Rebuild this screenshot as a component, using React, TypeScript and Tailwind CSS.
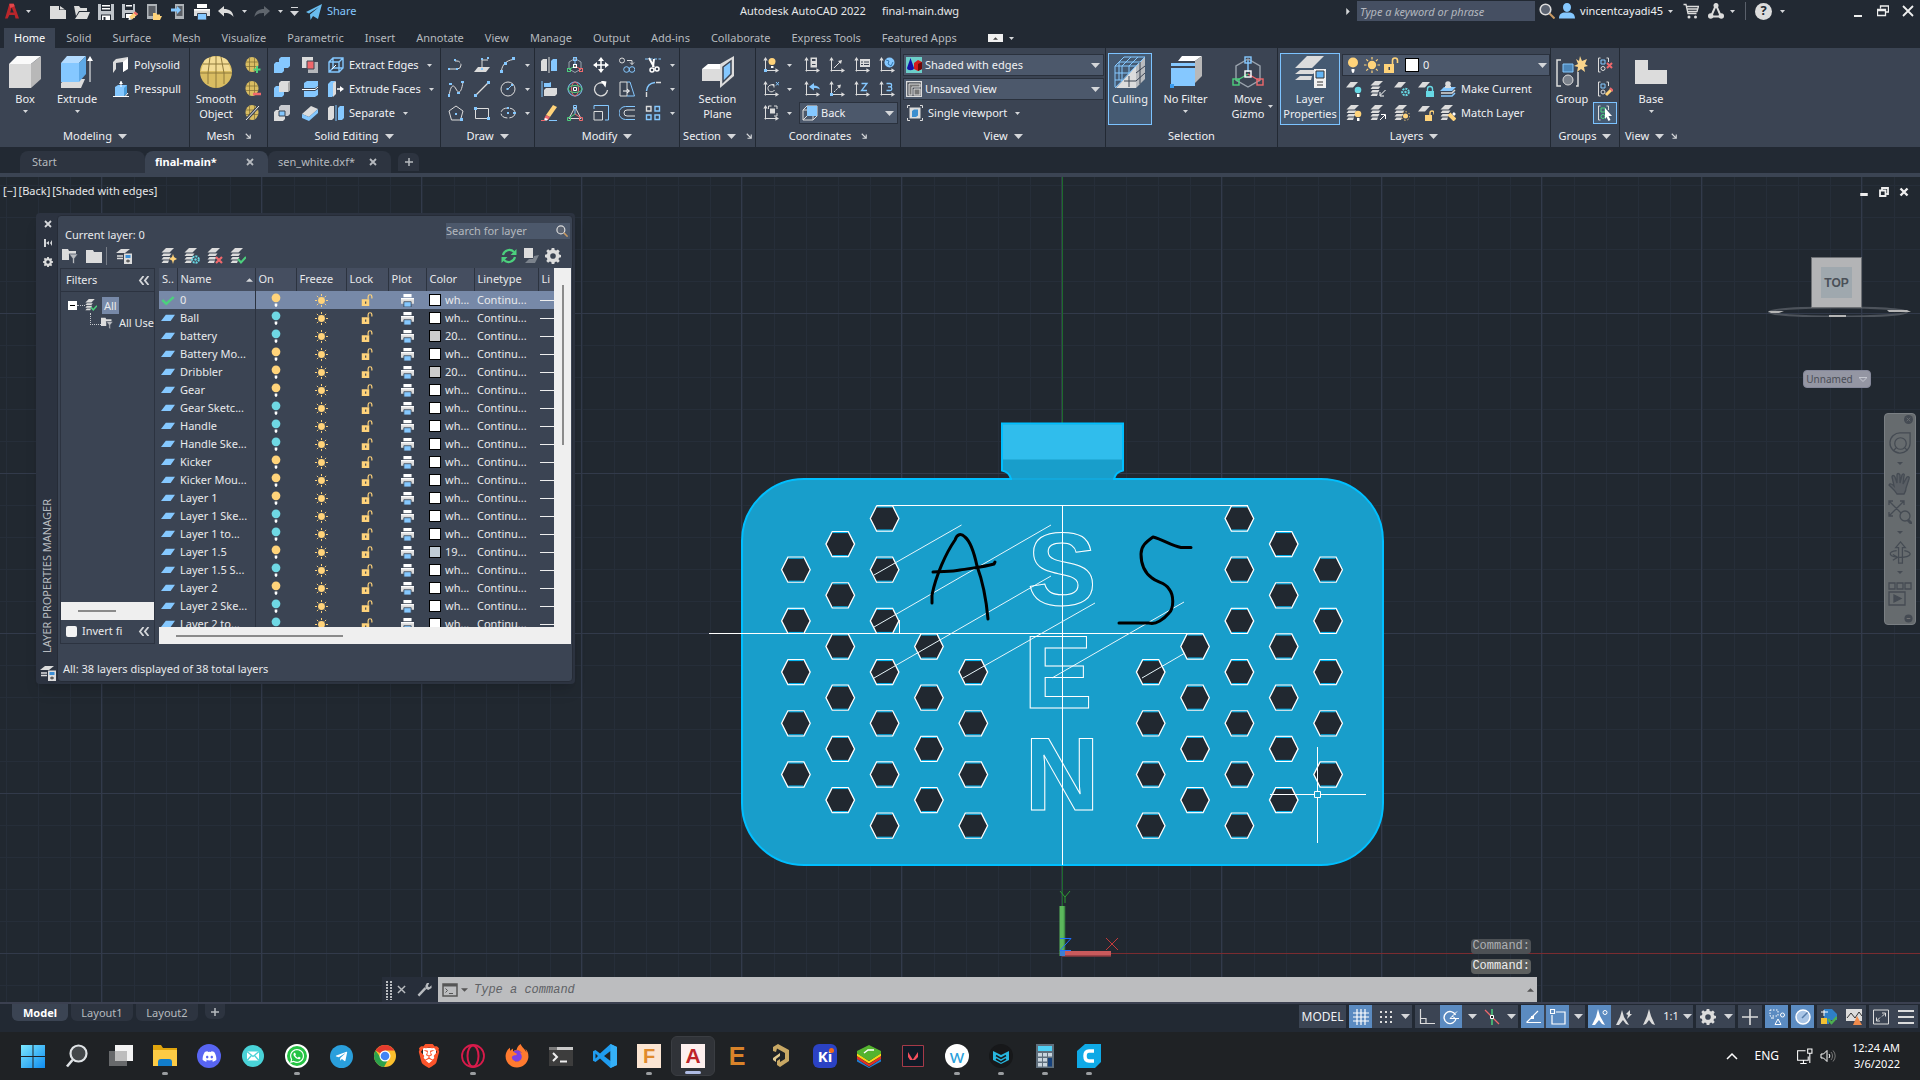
import type { ReactNode } from "react";
import { FaDiscord, FaWhatsapp, FaTelegramPlane, FaFirefoxBrowser } from "react-icons/fa";
import { SiBrave } from "react-icons/si";

const W = "#dcdcdc";
const B = "#85c8ff";
const Y = "#ffd37a";
const G = "#4cd07d";
const R = "#f0686c";
const C = "#67d9e5";

/* ---------- icon drawings on a 16 unit grid ---------- */

const axes = (
  <g>
    <path d="M2.5 3v11.5M1.5 13.5H13" stroke={W} fill="none" />
    <path d="M2.5 0L.3 3.6h4.4zM16 13.5l-3.6-2.2v4.4z" fill={W} />
  </g>
);
const sheet = <path d="M4.5 1H12L7 6.500H0z" fill={W} />;
const sheets = (
  <g>
    <path d="M5 0h8L8.500 4.500H.5z" fill={W} />
    <path d="M2.500 5.500h8L8.500 8H.5zM2.500 9h7L8 11.500H.5zM2.500 12.500H8L7 15H.5z" fill={W} />
  </g>
);
const egg = (
  <g>
    <ellipse cx="7" cy="7.500" rx="6.500" ry="7.500" fill="#d9bd62" />
    <path d="M.8 5h12.400M.8 9.500h12.400M4.500 1v13.500M9.500 1v13.500" stroke="#7d6b33" strokeWidth=".7" fill="none" />
  </g>
);
const gizmo = (
  <g fill="none">
    <path d="M8 1.500L2 5v7l6 3.500L14 12V5z" stroke="#9aa3ad" />
    <path d="M8 8V2" stroke={B} />
    <path d="M8 9l-6 3.500" stroke={G} />
    <path d="M8 9l6 3.500" stroke={R} />
    <rect x="6.500" y=".5" width="3" height="3" stroke={B} />
    <rect x=".5" y="11.500" width="3" height="3" stroke={G} />
    <rect x="12.500" y="11.500" width="3" height="3" stroke={R} />
    <rect x="6.500" y="7.500" width="3" height="3" stroke="#fff" />
  </g>
);
const brackets = (
  <g fill="none">
    <path d="M3.500 1h-2v14h2M9.500 1h2v4" stroke={W} />
  </g>
);
const sunRays = "M8 0v2.500M8 13.500V16M0 8h2.500M13.500 8H16M2.300 2.300l1.800 1.800M11.900 11.900l1.800 1.800M2.300 13.700l1.800-1.800M11.900 4.100l1.800-1.800";
const gearPath = "M6.700 0h2.600l.4 2 1.500.6 1.700-1.100 1.800 1.800-1.100 1.700.6 1.500 1.800.4v2.400l-2 .4-.5 1.500 1.200 1.700-1.800 1.800-1.700-1.100-1.500.6-.4 1.800H6.700l-.4-1.900-1.500-.6-1.700 1.200-1.800-1.800 1.100-1.700-.6-1.500L0 9.300V6.700l1.900-.4.600-1.500-1.200-1.700 1.800-1.800 1.700 1.100 1.500-.6zM8 5.200a2.800 2.800 0 100 5.600 2.800 2.800 0 000-5.600z";

const icons: Record<string, ReactNode> = {
  newFile: <path d="M0 2h9v4h7v9H0zM10 2l5 3.500h-5z" fill={W} />,
  open: <path d="M0 2h5l1.500 2H13v3H5l-3 5zM5.500 8H16l-3 7H1z" fill={W} />,
  save: <><path d="M0 0h16v16H0z" fill="#bfc4ca" /><path d="M3 0h10v7H3zM3 10.500h10V16H3z" fill="#222933" /><path d="M4 1h8v1.500H4zM4 4h8v1.500H4zM4 11.500h8V16H4z" fill="#fff" /><path d="M5.500 13h2v3h-2z" fill="#222933" /></>,
  saveAs: <><path d="M0 0h13v14H0z" fill="#bfc4ca" /><path d="M3 0h8v6H3zM3 9h8v5H3z" fill="#222933" /><path d="M4 1h6v1.500H4zM4 10h6v4H4z" fill="#fff" /><path d="M7 13l6-5.500 3 2.500-6 5.500z" fill={Y} /><path d="M7 13l3 2.500-3.500.5z" fill="#fff" /><path d="M13 7.500l3 2.500-1.500 1.400-3-2.500z" fill={R} /></>,
  openWeb: <><path d="M1 0h10v15H1z" fill="#aeb3b8" /><path d="M2.500 2h7v10h-7z" fill="#5c6067" /><path d="M7 9h3l1 1.500h3V12h2l-2 4H7z" fill={Y} /></>,
  saveWeb: <><path d="M5 0h9v15H5z" fill="#aeb3b8" /><path d="M6.500 2h6v10h-6z" fill="#5c6067" /><path d="M1 4.500h6V2l4 4-4 4V7.500H1z" fill={B} /></>,
  print: <><path d="M3 0h10v4H3z" fill="#fff" /><path d="M0 5h16v7H0z" fill={W} /><path d="M0 5h16v1.500H0z" fill="#fff" /><path d="M3.500 9.500h9V16h-9z" fill={B} stroke="#3b4453" /></>,
  undo: <path d="M6 2v3c5 0 9 2 9.500 8C13 9.500 10 9 6 9v3.500L0 7z" fill={W} />,
  redo: <path d="M10 2v3C5 5 1 7 .5 13 3 9.500 6 9 10 9v3.500L16 7z" fill="#5f656d" />,
  share: <path d="M0 8L16 0l-4 15-5-3-2.500 4-.5-5.500L13 3 3 9.500z" fill="#69bdf0" />,
  polysolid: <><path d="M0 5l3-3v10l-3 4zM3 2l12-2v11l-5 4V5L3 6z" fill={W} /><path d="M10 5l5-4v11l-5 3z" fill="#fff" /></>,
  presspull: <><path d="M2 6l3-2h9v8l-3 3H2z" fill={B} /><path d="M11 7v8l3-3V4z" fill="#4b9fdd" /><path d="M0 15.500h16M8 0v6M15 12l-2.500 3" stroke="#fff" fill="none" /><path d="M8 0L6 3h4z" fill="#fff" /></>,
  meshAdd: <>{egg}<path d="M12 9v7M8.500 12.500h7" stroke={G} strokeWidth="2" /></>,
  meshMinus: <>{egg}<path d="M8 13h8" stroke={R} strokeWidth="2.500" /></>,
  meshCrease: <>{egg}<path d="M1 15L14 1" stroke="#3b4453" strokeWidth="3" /><path d="M1 15L14 1" stroke="#eee" /></>,
  union: <path d="M5 2l2-2h9v9l-2 2h-4v3l-2 2H0V7l2-2h3z" fill={B} />,
  subtract: <><path d="M0 7l2-2h8v9l-2 2H0z" fill={B} /><path d="M5 2l2-2h9v9l-2 2H5z" fill={W} /><path d="M14 2l2-2v9l-2 2z" fill="#aaa" /></>,
  intersect: <><path d="M0 7l2-2h9v9l-2 2H0z" fill={W} /><path d="M5 2l2-2h9v9l-2 2H5z" fill="#c9cbd0" /><path d="M5 6h6v5H5z" fill={B} stroke="#3b4453" /></>,
  interfere: <><path d="M0 0h11v11H0z" fill={W} /><path d="M6 5h10v11H6z" fill="#b5b7bb" /><path d="M5 4h7v8H5z" fill={R} stroke="#3b4453" /></>,
  slice: <><path d="M2 2l3-2h11v5l-3 2H2zM2 10h11l3-2v6l-3 2H2z" fill={B} /><path d="M0 8.500h13l3-2.500" stroke="#fff" fill="none" /></>,
  thicken: <><path d="M0 9l9-8 7 3-9 8z" fill={W} /><path d="M0 9l7 3 9-8v4l-9 8-7-3z" fill={B} /></>,
  extractEdges: <><path d="M1 5l4-4h10v10l-4 4H1zM1 5h10v10M11 5l4-4M5 1v10M5 11h10M1 15l4-4" stroke={B} strokeWidth="1.400" fill="none" /><path d="M4 12l4-4" stroke="#fff" /></>,
  extrudeFaces: <><path d="M0 3l3-3h4v13l-3 3H0z" fill={B} /><path d="M5 2l3-2v13l-3 3z" fill={W} /><path d="M9 8h4" stroke="#fff" strokeWidth="1.500" /><path d="M16 8l-4-3v6z" fill="#fff" /></>,
  separate: <><path d="M0 3l2-2h4v12l-2 2H0z" fill={W} /><path d="M8 0v16" stroke={B} /><path d="M10 3l2-2h4v12l-2 2h-4z" fill={B} /></>,
  polyline: <><path d="M1 12h8a4 4 0 000-8H7" stroke={W} fill="none" strokeDasharray="7 1.500" /><path d="M0 11h2v2H0zM8 11h2v2H8zM6 2h2v2H6z" fill={B} /></>,
  line3d: <><path d="M0 15l4-5h12l-4 5z" fill={W} /><path d="M8 12V3h6" stroke={W} fill="none" /><path d="M7 11h2v2H7zM7 1h2v2H7zM13 0h2v2h-2z" fill={B} /></>,
  arc: <><path d="M1.500 14C2 8 6 3.500 13 2.500" stroke={W} fill="none" /><path d="M0 13h3v3H0zM4 5h3v3H4zM12 0h3v3h-3z" fill={B} /></>,
  spline: <><path d="M1 15C3 2 6 4 8 8s5 6 7-7" stroke={W} fill="none" /><path d="M0 13h2v3H0zM1 2h3v2H1zM9 11h3v2H9zM13 0h3v2h-3z" fill={B} /></>,
  line: <><path d="M2 14L14 2" stroke={W} strokeWidth="1.300" /><path d="M0 13h3v3H0zM13 0h3v3h-3z" fill={B} /></>,
  circle: <><circle cx="8" cy="8" r="7" stroke={W} fill="none" /><path d="M8 8l4-4" stroke={B} /><path d="M6.500 7h2v2h-2zM11 3h2v2h-2z" fill={B} /></>,
  polygon: <><path d="M8 1l7 5-2.500 9h-9L1 6z" stroke={W} fill="none" /><path d="M7 8h2v2H7zM12 13h3v3h-3z" fill={B} /></>,
  rectangle: <><path d="M1.500 3.500h13v10h-13z" stroke={W} fill="none" /><path d="M0 2h3v3H0zM13 12h3v3h-3z" fill={B} /></>,
  ellipse: <><ellipse cx="8" cy="8" rx="7" ry="5" stroke={W} fill="none" strokeDasharray="8 2" /><path d="M7 2h2v2H7zM7 7h2v2H7zM13 7h3v2h-3z" fill={B} /></>,
  mirror: <><path d="M0 4l2-2h4v12H0z" fill={W} /><path d="M8 0v16" stroke={W} /><path d="M10 4l2-2h4v12h-6z" fill={B} /></>,
  align: <><path d="M1 0v16" stroke={B} /><path d="M3 2h5l2-1v5H3z" fill={B} /><path d="M3 9l2-2h11v6l-2 2H3z" fill={W} /></>,
  erase: <><path d="M5 10L12 0l4 2-7 10z" fill={Y} /><path d="M5 10l4 2-2 3-4-1z" fill={R} /><path d="M4 13l3 1-1 1.500H3z" fill="#fff" /><path d="M0 15.500h4" stroke={R} /><path d="M8 15.500h8" stroke={B} /></>,
  gizmo,
  rotate3d: <g fill="none"><circle cx="8" cy="8" r="7" stroke={B} /><ellipse cx="8" cy="8" rx="3.500" ry="7" stroke={R} /><ellipse cx="8" cy="8" rx="7" ry="3.500" stroke={G} /><path d="M6.500 6.500h3v3h-3z" stroke="#fff" /></g>,
  scale3d: <g fill="none"><path d="M8 2L2 13.500h12z" stroke={W} /><path d="M8 9V2" stroke={B} /><path d="M8 9l-6 4" stroke={G} /><path d="M8 9l6 4" stroke={R} /><path d="M6.500 0.500h3v3h-3z" stroke={B} /><path d="M.5 12.500h3v3h-3z" stroke={G} /><path d="M12.500 12.500h3v3h-3z" stroke={R} /></g>,
  move: <><path d="M8 2v12M2 8h12" stroke="#fff" strokeWidth="1.500" /><path d="M8 0L5 4h6zM8 16l-3-4h6zM0 8l4-3v6zM16 8l-4-3v6z" fill="#fff" /></>,
  rotate: <><path d="M11 2.500A6.500 6.500 0 1014.500 9" stroke={W} strokeWidth="1.300" fill="none" /><path d="M7 0h6v6z" fill="#fff" transform="rotate(10 10 3)" /></>,
  scale: <><path d="M1 6.500h8.500V15H1z" stroke={W} fill="none" /><path d="M1 4V.5h14.500V15H12" stroke={B} fill="none" /></>,
  copy: <g fill="none"><circle cx="3" cy="3.500" r="2.500" stroke={W} /><path d="M8 3.500h5v4M11 5.500l2 2 2-2" stroke={W} /><circle cx="7.500" cy="12.500" r="2.800" stroke={B} /><circle cx="13" cy="12.500" r="2.800" stroke={B} /></g>,
  stretch: <g fill="none"><path d="M1 1h7v14H1z" stroke={W} /><path d="M8 1h3l4.500 14H8" stroke={B} /><path d="M4 10h6M8 8l2.500 2L8 12" stroke="#fff" /></g>,
  offset: <g fill="none"><path d="M16 1.500H6.500a6.300 6.300 0 000 13H16" stroke={B} /><path d="M16 5H8a3 3 0 000 6h8" stroke={W} /></g>,
  trim: <><path d="M0 2h16" stroke={B} strokeDasharray="3 1.500" /><path d="M4 1l5 9M9 2l-1 8" stroke="#fff" strokeWidth="2" /><circle cx="7" cy="13" r="2" stroke="#fff" strokeWidth="1.500" fill="none" /><circle cx="12" cy="12" r="2" stroke="#fff" strokeWidth="1.500" fill="none" /></>,
  fillet: <><path d="M1.500 16v-5M11 1.500h5" stroke={W} strokeWidth="1.400" /><path d="M1.500 10C2 5 5 2 10 1.500" stroke={B} strokeWidth="1.500" fill="none" /></>,
  array: <g fill="none" strokeWidth="1.400"><path d="M1.500 1.500h4.500v4.500H1.500z" stroke={W} /><path d="M10 1.500h4.500v4.500H10zM1.500 10h4.500v4.500H1.500zM10 10h4.500v4.500H10z" stroke={B} /></g>,
  ucsIcon: <>{axes}<circle cx="9" cy="4.500" r="3.500" fill={Y} /><path d="M8 9h2.500v2H8z" fill="#fff" /><path d="M1 12h3v3H1z" fill={B} /></>,
  ucsCalc: <>{axes}<path d="M6.500.5h6.500v10H6.500z" fill={W} /><path d="M8 2h3.500v2H8zM8 7h3.500v1H8z" fill="#3b4453" /></>,
  ucsDiag: <>{axes}<path d="M5 11l6-6" stroke={W} /><path d="M13 3l-4 1 3 3z" fill={W} /></>,
  ucsList: <>{axes}<path d="M6 2h10v8H6z" fill={W} /><path d="M7 5h2M10 5h5M7 7.500h2M10 7.500h5" stroke="#3b4453" /></>,
  ucsWorld: <>{axes}<circle cx="10.500" cy="5.500" r="5" fill={B} /><path d="M7 3l3 1-1 3 3 2 2-4" stroke="#3478b0" fill="none" /></>,
  ucsX: <>{axes}<path d="M11 5a3.500 3.500 0 10.500 4M8.500 3.500H11v3" stroke={W} fill="none" /><path d="M13 1l3 3.500M16 1l-3 3.500" stroke={B} /></>,
  ucsPrev: <>{axes}<path d="M10 2v2.500c3 0 5 1 6 4-2-1.500-3.500-1.500-6-1.500V9.500L5 5.700z" fill={B} /></>,
  ucsOrigin: <>{axes}<path d="M5 11l5-5" stroke={W} strokeDasharray="2 1" /><path d="M12 3.500l-4 1 3 3z" fill={W} /><path d="M1 12h3v3H1z" fill={B} /></>,
  ucsZ: <>{axes}<path d="M7.500 2.500H13L7.500 9.500H13" stroke={B} strokeWidth="1.300" fill="none" /></>,
  ucs3: <>{axes}<path d="M7.500 2.500h3.500a1.600 1.600 0 010 3.300H9M11 5.800a1.800 1.800 0 010 3.700H7.500" stroke={B} strokeWidth="1.300" fill="none" /></>,
  ucsFace: <>{axes}<path d="M7 3.500h5v5H7z" fill={W} /><path d="M5.500 4V1h3M11 1h3v3M14 8v3h-3" stroke={W} fill="none" /></>,
  backCube: <><path d="M1 5l4-4h10v10l-4 4H1zM1 5h10v10M11 5l4-4M1 15l4-4" stroke={W} fill="none" /><path d="M5 1h10v10H5z" fill={B} /></>,
  shaded: <><path d="M0 0h16v16H0z" fill="#6ccfc9" /><path d="M4.500 1L1 11c0 3 7 3 7 0z" fill="#1414a8" /><path d="M8 6l4-3 4 2v7l-4 2-4-2z" fill="#d41c1c" /><path d="M12 7l4-2v7l-4 2z" fill="#6d0808" /></>,
  unsaved: <><path d="M.5.5h15v15H.5z" fill="#4a4e56" stroke={W} strokeWidth="1.500" /><path d="M3 3h11v3H6v8H3z" fill="#777" stroke={W} /><path d="M8 8h6v6H8z" fill="#777" stroke={W} /></>,
  viewport: <><path d="M.5 3V.5H3M13 .5h2.500V3M15.500 13v2.500H13M3 15.500H.5V13" stroke={W} fill="none" /><path d="M2.500 2.500h11v11h-11z" fill={W} /><path d="M5 6l2-1.500h4v6L9 12H5z" fill="#3c8fcf" /></>,
  layOff: <>{sheet}<circle cx="12" cy="9" r="3.300" fill={C} /><path d="M11 13h2.500v3H11z" fill="#fff" /></>,
  layFreeze: <>{sheet}<circle cx="11.500" cy="11" r="3.300" stroke={C} strokeWidth="2" fill="none" strokeDasharray="2 1" /><circle cx="11.500" cy="11" r="1.200" fill={C} /></>,
  layLock: <>{sheet}<path d="M8 10h8v6H8z" fill={C} /><path d="M9.500 10V8a2.500 2.500 0 015 0v2" stroke={C} strokeWidth="1.400" fill="none" /></>,
  layUnlock: <>{sheet}<path d="M7 10h7v6H7z" fill={Y} /><path d="M12 10V8a2 2 0 014 0v1.500" stroke={Y} strokeWidth="1.400" fill="none" /></>,
  layIso: <>{sheets}<path d="M15.500 9l-5 5M10 11v4h4" stroke="#fff" fill="none" /></>,
  layUniso: <>{sheets}<path d="M10 15l5-5M11 9.500h4.500V14" stroke="#fff" fill="none" /></>,
  layOn: <>{sheets}<circle cx="12" cy="9" r="3.300" fill={Y} /><path d="M11 13h2.500v3H11z" fill="#fff" /></>,
  layThaw: <>{sheets}<circle cx="11.500" cy="11" r="2.500" fill={Y} /><circle cx="11.500" cy="11" r="4.300" stroke={Y} strokeDasharray="1.300 2" fill="none" /></>,
  makeCurrent: <><path d="M4 6h12l-4 4H0z" fill={B} /><path d="M1 12h11l3-3" stroke={W} strokeWidth="1.500" fill="none" /><path d="M1 15h11l3-3" stroke={B} strokeWidth="1.500" fill="none" /><circle cx="8" cy="3" r="2.800" fill={W} /><path d="M5 7h6V5H5z" fill={W} /></>,
  matchLayer: <>{sheets}<path d="M9 9l6 6" stroke={Y} strokeWidth="4" /><path d="M13 8l2 2" stroke="#fff" strokeWidth="2.500" /></>,
  layNew: <>{sheets}<path d="M12 6l1 3 3 2-3 1.500L12 16l-1-3.500L8 11l3-2z" fill={Y} /></>,
  layNewFrozen: <>{sheets}<circle cx="11.500" cy="11.500" r="3.300" stroke={C} strokeWidth="2" fill="none" strokeDasharray="2 1" /><circle cx="11.500" cy="11.500" r="1.200" fill={C} /></>,
  layDelete: <>{sheets}<path d="M9 9l6 6M15 9l-6 6" stroke={R} strokeWidth="2.200" /></>,
  laySet: <>{sheets}<path d="M8 11l3 3.500L16 9" stroke={G} strokeWidth="2" fill="none" /></>,
  layStates: <><path d="M5 1h9L9 5H0z" fill={W} /><path d="M1 8h6M1 10.500h6" stroke={W} strokeWidth="1.500" /><path d="M8 5.500h8V16H8z" fill={W} /><path d="M9.500 7h5v3h-5z" fill="#3b8fd6" /><path d="M10 13h4M12 11.500v3" stroke="#333" /></>,
  ungroup: <>{brackets}<path d="M4 3h4v4H4z" stroke={B} fill="none" /><circle cx="6" cy="11.500" r="2" stroke={W} fill="none" /><path d="M10 6l5 5M15 6l-5 5" stroke={R} strokeWidth="2" /></>,
  groupEdit: <>{brackets}<path d="M4 3h4v4H4z" stroke={B} fill="none" /><circle cx="6" cy="11" r="2" stroke={W} fill="none" /><path d="M9 14l5-5" stroke={Y} strokeWidth="3" /><path d="M13 7l3 3" stroke={R} strokeWidth="2" /></>,
  groupSel: <>{brackets}<path d="M4 3h4v4H4z" stroke={G} fill="none" /><circle cx="6" cy="11.500" r="2" stroke={G} fill="none" /><path d="M8 3l7 8h-3.500l2 4-2 1-2-4L8 14z" fill="#fff" /></>,
  bulbY: <><circle cx="8" cy="5.500" r="5" fill={Y} /><path d="M6.500 12h3v2l-1 2h-1l-1-2z" fill="#fff" /></>,
  bulbC: <><circle cx="8" cy="5.500" r="5" fill="#6fd8e4" /><path d="M6.500 12h3v2l-1 2h-1l-1-2z" fill="#fff" /></>,
  sun: <><circle cx="8" cy="8" r="4.200" fill={Y} /><path d={sunRays} stroke={Y} strokeWidth="1.200" /></>,
  unlock: <><path d="M1 7h10v9H1z" fill={Y} /><path d="M9.500 7V3.500a2.500 2.500 0 015 0V6" stroke={Y} strokeWidth="1.600" fill="none" /><path d="M5.500 10h1.500v3H5.500z" fill="#3b4453" /></>,
  plane: <path d="M5.500 3.500H16L11 12H0z" fill={B} />,
  check: <path d="M1.500 8l4.500 5 8.500-9" stroke={G} strokeWidth="3" fill="none" />,
  filterNew: <><path d="M0 1h6l1 2h7v3H0zM0 6h7v6H0z" fill={W} /><path d="M7 6h9l-3.500 4.500V16l-2-1v-4.500z" fill="#b9bcc0" stroke="#3b4453" strokeWidth=".7" /></>,
  folder: <path d="M0 2h7l1 2h8v11H0z" fill={W} />,
  refresh: <><path d="M2 7a6.500 6.500 0 0111-3M14 9a6.500 6.500 0 01-11 3" stroke={G} strokeWidth="2.200" fill="none" /><path d="M15.500 1v6h-6zM.5 15V9h6z" fill={G} /></>,
  toggleOverride: <><path d="M1 0h9v10H1z" fill={W} /><path d="M6 11h4l1-3 5-1-4 8H2z" fill="#7b828c" /></>,
  gear: <path d={gearPath} fill={W} fillRule="evenodd" />,
  search: <><circle cx="6.500" cy="6.500" r="5.300" fill="#5a6270" stroke={W} strokeWidth="1.600" /><path d="M10.500 10.500l5 5" stroke="#c99a63" strokeWidth="2" /></>,
  user: <path d="M8 0c2.500 0 4 1.800 4 4.300S10.500 9 8 9 4 6.800 4 4.300 5.500 0 8 0zM0 15.500C0 11 3 9.500 6 9.500h4c3 0 6 1.500 6 6z" fill={B} />,
  cart: <><path d="M.5 1.500h2.500l2 9h8.500M4 3.500h11.500l-1.500 5H5M4.500 6h10" stroke={W} strokeWidth="1.300" fill="none" /><circle cx="6" cy="14" r="1.500" fill={W} /><circle cx="12.500" cy="14" r="1.500" fill={W} /></>,
  appsA: <><path d="M8 2L3 13.500h10z" fill="none" stroke={W} strokeWidth="2" /><circle cx="8" cy="2.500" r="2.500" fill={W} /><circle cx="2.700" cy="13" r="2.700" fill={W} /><circle cx="13.300" cy="13" r="2.700" fill={W} /></>,
  net: <g fill="none" stroke="#fff"><path d="M9 2.500H1.500v9h10V8M4 14.500h6M7 12v2.500" /><path d="M11 1h4v4h-4zM13 5v9" /></g>,
  speaker: <g fill="none" stroke="#fff"><path d="M1 6h2.500L7 2.500v11L3.500 10H1z" /><path d="M9 6a3 3 0 010 4" /><path d="M11 4a6 6 0 010 8M13 2.500a8 8 0 010 11" stroke="#777" /></g>,
  sGrid: <path d="M4 0v16M8 0v16M12 0v16M0 4h16M0 8h16M0 12h16" stroke="#fff" strokeWidth="1.200" />,
  sDots: <path d="M2 3h2M7 3h2M12 3h2M2 8h2M7 8h2M12 8h2M2 13h2M7 13h2M12 13h2" stroke={W} strokeWidth="2" />,
  sOrtho: <path d="M1.500 0v14.500H16M1.500 9.500H7V15" stroke={W} strokeWidth="1.200" fill="none" />,
  sPolar: <g fill="none" stroke="#fff"><path d="M12.500 6A6 6 0 1013 9.500" strokeWidth="1.400" /><path d="M7 9.500h9M7 9.500l7-7" /><path d="M12.500 9.500L9 7" /></g>,
  sIso: <><path d="M1 1l14 14" stroke={R} strokeWidth="1.300" /><path d="M8 0v16" stroke={G} strokeWidth="1.500" /><path d="M6.500 6.500h3v3h-3z" fill="#222" stroke="#fff" /></>,
  sTrack: <><path d="M1.500 13.500H16M1.500 13.500L13 2" stroke="#fff" strokeWidth="1.200" fill="none" /><path d="M6 7h3v3H6z" fill="#fff" /></>,
  sOsnap: <g fill="none" stroke="#fff" strokeWidth="1.200"><path d="M6 3h9v12H2V6" /><path d="M.5.5h4v4h-4z" /></g>,
  sAnn1: <><path d="M6 0l2 7 5 9-3-1-3-4-4 5H0l4-8z" fill="#fff" /><circle cx="13" cy="3.500" r="2" stroke="#fff" fill="none" /></>,
  sAnn2: <><path d="M6 1l2 7 5 8-3-1-3-4-4 5H0l4-8z" fill={W} /><path d="M10 5l4-4v4h2l-5 5 1-4z" fill={W} /></>,
  sAnn3: <path d="M8 0l2 7 4 9-3-1-3-4-3 4-3 1 4-9z" fill={W} />,
  sPlus: <path d="M8 0v16M0 8h16" stroke={W} strokeWidth="1.600" />,
  sUnits: <g fill="none" stroke="#fff"><path d="M1 1h8v6H1z" strokeDasharray="1.500 1.500" /><path d="M6 15.500h6L9 10zM2 9h3" /><circle cx="13.500" cy="6" r="2" /></g>,
  sClock: <><circle cx="8" cy="8" r="7" fill="#a9c5e6" stroke="#fff" strokeWidth="1.500" /><path d="M12.500 3.500L7 9" stroke="#557ba8" strokeWidth="1.500" /></>,
  sCloud: <><path d="M3 0h8l5 5v6H8v4H3z" fill="#2f7fc6" /><path d="M0 3h7M3 1v6" stroke="#fff" /><path d="M0 9h6v6H0z" fill="#f3c033" /><path d="M7 10l3.500 4L16 8" stroke="#4caf50" strokeWidth="2.500" fill="none" /></>,
  sGraph: <><path d="M0 0h16v12H0z" fill={W} /><path d="M1 9l4-5 4 5 4-6 3 4" stroke="#333" fill="none" /><path d="M11 7l5 9H7z" fill="#f08a4b" /></>,
  sFull: <><path d="M.5 1h15v14H.5z" stroke={W} fill="none" /><path d="M9 7.500l3-3M9 4h3.500v3.500M7 8.500l-3 3M7 12H3.500V8.500" stroke={W} fill="none" /></>,
  sMenu: <path d="M0 2h16M0 8h16M0 14h16" stroke={W} strokeWidth="2" />,
  terminal: <><path d="M1 2h14v12H1z" stroke="#555" fill="none" strokeWidth="1.500" /><path d="M1 2h14v2.500H1z" fill="#555" /><path d="M3.500 6.500l2 2-2 2M7 11.500h4" stroke="#555" fill="none" /></>,
};

const Ic = ({ n, c = "size-4" }: { n: string; c?: string }) => (
  <svg viewBox="0 0 16 16" className={`${c} shrink-0`} preserveAspectRatio="none" aria-hidden="true">{icons[n]}</svg>
);

const Caret = ({ big }: { big?: boolean }) => (
  <svg viewBox="0 0 8 4" className={big ? "h-[5px] w-[9px] shrink-0" : "h-[3px] w-[5px] shrink-0"} preserveAspectRatio="none" aria-hidden="true">
    <path d="M0 0h8L4 4z" fill="#d5d7da" />
  </svg>
);

const IconBtn = ({ n, label, c = "w-6" }: { n: string; label: string; c?: string }) => (
  <button aria-label={label} className={`${c} flex h-6 shrink-0 items-center justify-center`}><Ic n={n} /></button>
);

const CaretBtn = ({ label, c = "w-4" }: { label: string; c?: string }) => (
  <button aria-label={label} className={`${c} flex h-6 shrink-0 items-center justify-center`}><Caret /></button>
);

/* ---------- large ribbon drawings on a 32 unit grid ---------- */

const big: Record<string, ReactNode> = {
  box: <><path d="M0 8h22v24H0z" fill="#dadada" /><path d="M0 8l8-8h24l-10 8z" fill="#fafafa" /><path d="M22 8L32 0v23l-10 9z" fill="#b8b8b8" /></>,
  extrude: <><path d="M0 27l5-4h19l-4 9H0z" fill={W} /><path d="M0 7h18v19H0z" fill={B} /><path d="M0 7l6-7h19l-7 7z" fill="#b4dcff" /><path d="M18 7l7-7v18l-7 8z" fill="#5ea9e6" /><path d="M29 3v23" stroke="#fff" /><path d="M29 0l-3 5h6z" fill="#fff" /></>,
  smooth: <><ellipse cx="16" cy="16" rx="16" ry="16" fill="#d9bd62" /><path d="M4 5C8-1 24-1 28 5l3 10H1z" fill="#f3dc95" /><path d="M3 8h26M0 17h32M10 1L8 17v11M21 1l3 16v11M16 0v32" stroke="#8f7a3c" fill="none" /></>,
  section: <><path d="M0 13h18v12H0z" fill={W} /><path d="M0 13l6-5h18l-6 5z" fill="#fff" /><path d="M18 8L32 0v20L18 32z" fill={W} /><path d="M21 11l8-6v13l-8 8z" fill={B} stroke="#3b4453" strokeWidth="1.500" /></>,
  culling: <><path d="M22 10v22H2L22 10z" fill={W} /><path d="M22 10l9-9v22l-9 9z" fill="#b9bcc0" /><path d="M1 10L10 1h21l-9 9zM1 10v21M8 10v15M15 10v8M1 17h14M1 24h7M5 6h21M8 10l9-9M15 10l9-9M5 6v18M22 10L1 32" stroke={B} fill="none" /><path d="M26 6v22M22 17l9-7M22 25l9-8M15 20v11M10 25h12" stroke="#3b4453" fill="none" /></>,
  nofilter: <><path d="M8 5L12 0h20l-7 5z" fill="#fff" /><path d="M25 5l7-5v20l-7 7z" fill="#b8b8b8" /><path d="M1 7h24v3H1zM1 12h24v18H1z" fill={B} /><path d="M0 28h4v4H0z" fill="#3a9cf0" /></>,
  gizmo: <g transform="scale(2)" strokeWidth=".7">{gizmo}</g>,
  layers: <><path d="M13 0h17L18 12H1zM6 14h18l-5 4H1zM6 20h12l-1 4H1z" fill={W} /><path d="M20 13h12v19H20z" fill="#f2f2f2" /><path d="M22 15h8v7h-8z" fill="#62b5f6" stroke="#333" /><path d="M23 26h6M23 29h6" stroke="#333" /></>,
  group: <><path d="M5 4H1v26h4M20 30h2V16" stroke={W} strokeWidth="1.500" fill="none" /><path d="M7 8h10v8H7z" fill="#4c86b8" stroke={B} /><circle cx="12" cy="24" r="5" fill="#7b828c" stroke={W} /><path d="M24 0l2 5 5-2-2 5 3 2-4 1 1 5-4-3-4 3 1-5-4-1 4-2-2-5 3 2z" fill="#fbd58b" /></>,
  base: <path d="M0 4h13v10h19v14H0z" fill={W} />,
};

function BigBtn({ n, label, c, caret, on, side }: { n: string; label: string; c: string; caret?: boolean; on?: boolean; side?: boolean }) {
  return (
    <button className={`${c} flex h-[72px] shrink-0 flex-col items-center border ${on ? "border-[#7cc3ff] bg-[#455a72]" : "border-transparent"}`}>
      <svg viewBox="0 0 32 32" className="mt-[2px] size-8 shrink-0" aria-hidden="true">{big[n]}</svg>
      <span className="mt-[3px] flex items-center gap-1 leading-[15px]">
        {side && <span className="w-[5px]" />}
        <span className="whitespace-pre text-center">{label}</span>
        {side && <Caret />}
      </span>
      {caret && <span className="mt-1"><Caret /></span>}
    </button>
  );
}

const Rows = ({ c = "", children }: { c?: string; children: ReactNode }) => (
  <div className={`${c} grid shrink-0 auto-rows-[24px] items-center`}>{children}</div>
);

const TextBtn = ({ n, label, caret }: { n: string; label: string; caret?: boolean }) => (
  <button className="flex h-6 items-center gap-[5px] whitespace-nowrap">
    <Ic n={n} />
    <span>{label}</span>
    {caret && <span className="ml-[3px]"><Caret /></span>}
  </button>
);

function Panel({ title, c, caret, launch, children }: { title: string; c: string; caret?: boolean; launch?: boolean; children: ReactNode }) {
  return (
    <section className={`${c} flex shrink-0 flex-col border-r border-[#222933]`}>
      <div className="flex h-[77px] pt-[5px]">{children}</div>
      <div className="flex h-[22px] items-center justify-center gap-[6px]">
        <h2>{title}</h2>
        {caret && <Caret big />}
        {launch && (
          <svg viewBox="0 0 8 8" className="ml-1 size-[6px] shrink-0" aria-hidden="true"><path d="M1 1l5 5M7 2v5H2" stroke="#d5d7da" strokeWidth="1.500" fill="none" /></svg>
        )}
      </div>
    </section>
  );
}

function Drop({ n, label, value, c }: { n: string; label: string; value: string; c: string }) {
  return (
    <div className={`${c} relative flex h-[22px] items-center border border-[#2a313d] bg-[#4c586b]`}>
      <span className="pointer-events-none absolute left-[2px]"><Ic n={n} /></span>
      <select aria-label={label} className="h-full w-full appearance-none bg-transparent pl-[21px] text-[11px] text-[#f0f1f3] outline-none">
        <option>{value}</option>
      </select>
      <span className="pointer-events-none absolute right-[3px]"><Caret big /></span>
    </div>
  );
}

/* ---------- title bar and ribbon ---------- */

function TitleBar() {
  return (
    <header className="flex h-[28px] items-start bg-[#222933]">
      <div className="flex h-[23px] w-[740px] items-center">
        <button aria-label="Application menu" className="flex w-9 items-center gap-[7px] pl-[5px]">
          <svg viewBox="0 0 16 18" className="h-[17px] w-[14px]" aria-hidden="true"><path d="M5 0h5l6 17h-4l-1-4H5l-2 4H0z" fill="#b9262b" /><path d="M7.500 4L6 10h4z" fill="#222933" /><path d="M5 0h5l1 3-5 2z" fill="#e2474b" /></svg>
          <Caret />
        </button>
        <div className="flex items-center pl-[10px]">
          <IconBtn n="newFile" label="New" />
          <IconBtn n="open" label="Open" />
          <IconBtn n="save" label="Save" />
          <IconBtn n="saveAs" label="Save as" />
          <IconBtn n="openWeb" label="Open from web" />
          <IconBtn n="saveWeb" label="Save to web" />
          <IconBtn n="print" label="Plot" />
          <IconBtn n="undo" label="Undo" />
          <CaretBtn label="Undo history" c="w-[12px]" />
          <IconBtn n="redo" label="Redo" />
          <CaretBtn label="Redo history" c="w-[12px]" />
          <button aria-label="Customize" className="flex w-4 flex-col items-center gap-[3px]"><span className="h-px w-[7px] bg-[#d5d7da]" /><Caret big /></button>
          <button className="ml-1 flex items-center gap-[5px] text-[#85c8ff]"><Ic n="share" /> Share</button>
        </div>
      </div>
      <h1 className="flex h-[23px] items-center gap-4 text-[#e6e7e9]"><span>Autodesk AutoCAD 2022</span><span>final-main.dwg</span></h1>
      <div className="ml-auto flex h-[22px] items-center">
        <svg viewBox="0 0 4 8" className="mr-[7px] h-[7px] w-1" aria-hidden="true"><path d="M0 0l4 4-4 4z" fill="#d5d7da" /></svg>
        <input aria-label="Search help" placeholder="Type a keyword or phrase" className="h-5 w-[178px] bg-[#454f62] px-[3px] text-[11px] italic outline-none placeholder:text-[#b4b8bf]" />
        <IconBtn n="search" label="Search" />
        <button className="flex items-center gap-[5px]"><Ic n="user" /> vincentcayadi45<Caret /></button>
        <IconBtn n="cart" label="App store" c="ml-2 w-5" />
        <IconBtn n="appsA" label="Autodesk apps" c="ml-[5px] w-5" />
        <CaretBtn label="More apps" c="w-3" />
        <span className="mx-[7px] h-[18px] w-px bg-[#5a606b]" />
        <button aria-label="Help" className="ml-[2px] flex size-[17px] items-center justify-center rounded-full bg-[#dcdcdc] text-[13px] font-bold text-[#222933]">?</button>
        <CaretBtn label="Help menu" c="ml-1 w-3" />
        <div className="ml-[58px] flex items-center text-[#eee]">
          <button aria-label="Minimize" className="flex h-6 w-6 items-center justify-center pt-[9px]"><span className="h-[2px] w-2 bg-[#eee]" /></button>
          <button aria-label="Restore" className="flex h-6 w-[26px] items-center justify-center"><svg viewBox="0 0 12 12" className="size-3"><path d="M3.500 3.500V1h8v6H9M.5 4.500h8v6h-8zM.5 5.500h8" stroke="#eee" fill="none" strokeWidth="1.300" /></svg></button>
          <button aria-label="Close" className="flex h-6 w-6 items-center justify-center"><svg viewBox="0 0 12 12" className="size-3"><path d="M1 1l10 10M11 1L1 11" stroke="#eee" strokeWidth="1.800" /></svg></button>
        </div>
      </div>
    </header>
  );
}

const menu = ["Home", "Solid", "Surface", "Mesh", "Visualize", "Parametric", "Insert", "Annotate", "View", "Manage", "Output", "Add-ins", "Collaborate", "Express Tools", "Featured Apps"];

function Tabs() {
  return (
    <nav className="flex h-5 gap-px bg-[#222933] pl-1">
      {menu.map((m, i) => (
        <button key={m} className={i === 0 ? "bg-[#3b4453] px-[10px] text-white" : "px-[10px] text-[#b6babf]"}>{m}</button>
      ))}
      <button aria-label="Minimize ribbon" className="ml-5 flex items-center gap-[6px]">
        <span className="flex h-2 w-[15px] items-center justify-center bg-[#f0f0f0]"><svg viewBox="0 0 8 4" className="h-[3px] w-[5px]"><path d="M0 4h8L4 0z" fill="#444" /></svg></span>
        <Caret />
      </button>
    </nav>
  );
}

function IconGrid({ rows, c, cell = "w-6" }: { rows: string[][]; c?: string; cell?: string }) {
  return (
    <Rows c={c}>
      {rows.map((r) => (
        <div key={r[0]} className="flex items-center">
          {r.map((n) => (n === "v" ? <CaretBtn key="v" label="More" c="w-3" /> : <IconBtn key={n} n={n} label={n} c={cell} />))}
        </div>
      ))}
    </Rows>
  );
}

function Ribbon() {
  return (
    <div className="flex h-[99px] bg-[#3b4453] pl-px">
      <Panel title="Modeling" caret c="w-[189px]">
        <BigBtn n="box" label="Box" c="w-12" caret />
        <BigBtn n="extrude" label="Extrude" c="w-14" caret />
        <Rows c="ml-2"><TextBtn n="polysolid" label="Polysolid" /><TextBtn n="presspull" label="Presspull" /></Rows>
      </Panel>
      <Panel title="Mesh" launch c="w-[78px]">
        <BigBtn n="smooth" label={"Smooth\nObject"} c="w-[52px]" />
        <IconGrid rows={[["meshAdd"], ["meshMinus"], ["meshCrease"]]} cell="w-[22px]" />
      </Panel>
      <Panel title="Solid Editing" caret c="w-[173px]">
        <IconGrid rows={[["union", "interfere"], ["subtract", "slice"], ["intersect", "thicken"]]} cell="w-7" />
        <Rows c="ml-1"><TextBtn n="extractEdges" label="Extract Edges" caret /><TextBtn n="extrudeFaces" label="Extrude Faces" caret /><TextBtn n="separate" label="Separate" caret /></Rows>
      </Panel>
      <Panel title="Draw" caret c="w-[94px]">
        <IconGrid c="ml-[2px]" cell="w-[26px]" rows={[["polyline", "line3d", "arc", "v"], ["spline", "line", "circle", "v"], ["polygon", "rectangle", "ellipse", "v"]]} />
      </Panel>
      <Panel title="Modify" caret c="w-[145px]">
        <IconGrid c="ml-[1px]" cell="w-[26px]" rows={[["mirror", "gizmo", "move", "copy", "trim", "v"], ["align", "rotate3d", "rotate", "stretch", "fillet", "v"], ["erase", "scale3d", "scale", "offset", "array", "v"]]} />
      </Panel>
      <Panel title="Section" caret launch c="w-[76px]">
        <BigBtn n="section" label={"Section\nPlane"} c="w-[75px]" />
      </Panel>
      <Panel title="Coordinates" launch c="w-[145px]">
        <IconGrid c="ml-[3px]" rows={[["ucsIcon", "v"], ["ucsX", "v"], ["ucsFace", "v"]]} />
        <Rows c="ml-[4px]">
          <div className="flex">{["ucsCalc", "ucsDiag", "ucsList", "ucsWorld"].map((n) => <IconBtn key={n} n={n} label={n} c="w-[25px]" />)}</div>
          <div className="flex">{["ucsPrev", "ucsOrigin", "ucsZ", "ucs3"].map((n) => <IconBtn key={n} n={n} label={n} c="w-[25px]" />)}</div>
          <Drop n="backCube" label="UCS" value="Back" c="w-[99px]" />
        </Rows>
      </Panel>
      <Panel title="View" caret c="w-[205px]">
        <Rows c="ml-[2px]">
          <Drop n="shaded" label="Visual style" value="Shaded with edges" c="w-[201px]" />
          <Drop n="unsaved" label="View" value="Unsaved View" c="w-[201px]" />
          <div className="pl-[4px]"><TextBtn n="viewport" label="Single viewport" caret /></div>
        </Rows>
      </Panel>
      <Panel title="Selection" c="w-[172px]">
        <div className="flex pl-[2px]">
          <BigBtn n="culling" label="Culling" c="w-11" on />
          <BigBtn n="nofilter" label="No Filter" c="w-[67px]" caret />
          <BigBtn n="gizmo" label={"Move\nGizmo"} c="w-[58px]" side />
        </div>
      </Panel>
      <Panel title="Layers" caret c="w-[273px]">
        <div className="flex pl-[2px]">
          <BigBtn n="layers" label={"Layer\nProperties"} c="w-[60px]" on />
          <Rows c="ml-[2px]">
            <div className="relative flex h-[22px] w-[208px] items-center border border-[#2a313d] bg-[#4c586b]">
              <span className="pointer-events-none absolute left-[2px] flex items-center gap-[3px]"><Ic n="bulbY" /><Ic n="sun" /><Ic n="unlock" /><span className="ml-[3px] size-[14px] border border-black bg-white" /></span>
              <select aria-label="Current layer" className="h-full w-full appearance-none bg-transparent pl-[80px] text-[11px] text-[#f0f1f3] outline-none"><option>0</option></select>
              <span className="pointer-events-none absolute right-[2px]"><Caret big /></span>
            </div>
            <div className="flex items-center">{["layOff", "layIso", "layFreeze", "layLock"].map((n) => <IconBtn key={n} n={n} label={n} c="w-6" />)}<span className="ml-[2px]"><TextBtn n="makeCurrent" label="Make Current" /></span></div>
            <div className="flex items-center">{["layOn", "layUniso", "layThaw", "layUnlock"].map((n) => <IconBtn key={n} n={n} label={n} c="w-6" />)}<span className="ml-[2px]"><TextBtn n="matchLayer" label="Match Layer" /></span></div>
          </Rows>
        </div>
      </Panel>
      <Panel title="Groups" caret c="w-[69px]">
        <BigBtn n="group" label="Group" c="w-[42px]" />
        <Rows>
          <IconBtn n="ungroup" label="Ungroup" />
          <IconBtn n="groupEdit" label="Edit group" />
          <button aria-label="Group selection" className="flex h-[22px] w-6 items-center justify-center border border-[#7cc3ff] bg-[#455a72]"><Ic n="groupSel" /></button>
        </Rows>
      </Panel>
      <section className="flex w-[62px] flex-col">
        <div className="flex h-[77px] pt-[5px]"><BigBtn n="base" label="Base" c="w-[62px]" caret /></div>
        <div className="flex h-[22px] items-center justify-center gap-[6px]"><h2>View</h2><Caret big /><svg viewBox="0 0 8 8" className="ml-px size-[6px] shrink-0"><path d="M1 1l5 5M7 2v5H2" stroke="#d5d7da" strokeWidth="1.500" fill="none" /></svg></div>
      </section>
    </div>
  );
}

const TabX = ({ label }: { label: string }) => (
  <button aria-label={label}><svg viewBox="0 0 8 8" className="size-2"><path d="M1 1l6 6M7 1L1 7" stroke="#b6babf" strokeWidth="1.800" /></svg></button>
);

function FileTabs() {
  return (
    <div className="flex h-[30px] items-end border-b-4 border-[#3b4453] bg-[#222933] pl-5">
      <div className="flex h-[22px] w-[125px] items-center rounded-t-lg bg-[#2d3440] pl-3 text-[#b6babf]"><button>Start</button></div>
      <div className="flex h-[22px] w-[123px] items-center justify-between rounded-t-lg bg-[#3b4453] pl-[10px] pr-[14px] font-bold text-white"><button className="font-bold">final-main*</button><TabX label="Close final-main" /></div>
      <div className="flex h-[22px] w-[123px] items-center justify-between rounded-t-lg bg-[#2d3440] pl-[10px] pr-[14px] text-[#b6babf]"><button>sen_white.dxf*</button><TabX label="Close sen_white" /></div>
      <button aria-label="New tab" className="mb-[2px] ml-[7px] flex h-[18px] w-[21px] items-center justify-center rounded-t-md bg-[#2d3440]"><svg viewBox="0 0 8 8" className="size-2"><path d="M4 0v8M0 4h8" stroke="#b6babf" strokeWidth="1.500" /></svg></button>
    </div>
  );
}

/* ---------- model space ---------- */

const rowsByColumn: Record<number, number[]> = { 2: [6, 8, 10, 12], 3: [5, 7, 9, 11], 4: [0, 2, 4, 6, 8, 10, 12], 5: [1, 3, 5, 7, 9, 11], 6: [2, 4, 6, 8, 10] };
const holes = Object.entries(rowsByColumn).flatMap(([k, rows]) => rows.flatMap((r) => [-1, 1].map((s) => ({ x: 1062 + s * 44.35 * Number(k), y: 518.5 + 25.6 * r }))));
const hatch = [[874, 575, 961.5, 525], [874, 627, 1051, 525], [874, 678, 1051, 576], [963, 678, 1095, 603], [1052, 678, 1184, 602], [1142, 678, 1185, 653]];

function Drawing() {
  return (
    <svg className="absolute inset-0 h-full w-full" aria-label="Model space">
      <defs>
        <pattern id="minor" width="32" height="32" x="6" y="8" patternUnits="userSpaceOnUse"><path d="M.5 0v32M0 .5h32" stroke="#262e39" /></pattern>
        <pattern id="major" width="160" height="160" x="101" y="136" patternUnits="userSpaceOnUse"><path d="M.5 0v160M0 .5h160" stroke="#323a4a" /></pattern>
      </defs>
      <rect width="100%" height="100%" fill="#212830" />
      <rect width="100%" height="100%" fill="url(#minor)" />
      <rect width="100%" height="100%" fill="url(#major)" />
      <g transform="translate(0 -177)" fill="none">
        <path d="M1062.500 177v246M1062.500 865v45" stroke="#1d6b2b" />
        <path d="M1111 953.500H4000" stroke="#7a2c30" />
        <rect x="742" y="479" width="641" height="386" rx="62" fill="#189ecb" stroke="#00bfff" strokeWidth="2" />
        <path d="M1002 423.500h121v47c-5 1-8 4-9 8.500h-103c-1-4.500-4-7.500-9-8.500z" fill="#189ecb" stroke="#00bfff" strokeWidth="2" />
        <path d="M1003 424.500h119v35h-119z" fill="#30bdec" />
        <path d="M1012 479h101" stroke="#189ecb" strokeWidth="3" />
        <path d="M1012 479h101" stroke="#0fb2ec" />
        {holes.map(({ x, y }) => (
          <g key={`${x} ${y}`} transform={`translate(${x} ${y})`}>
            <path d="M-8-12.500H8L14.300 0 8 12.500H-8L-14.300 0z" fill="#212830" stroke="#fff" strokeWidth="1.300" />
            <path d="M-7.500-11.500H7.500M7.500 11.500H-7.500" stroke="#00bfff" />
          </g>
        ))}
        <path d="M877 505.500h371M709 633.500h494M1062.500 505v360M899.500 620v13" stroke="#fff" />
        {hatch.map(([a, b, c, d]) => <path key={`${a} ${b}`} d={`M${a} ${b}L${c} ${d}`} stroke="#e8f6fb" />)}
        <g fontFamily="Liberation Sans" fontWeight="bold" fontSize="104" textAnchor="middle" stroke="#fff">
          <text x="1062" y="605">S</text>
          <text x="1058" y="708">E</text>
          <text x="1062" y="810">N</text>
        </g>
        <g stroke="#000" strokeWidth="3" strokeLinecap="round" strokeLinejoin="round">
          <path d="M932 603v-8c4-20 14-42 23-55 2-6 6-7 10-3 6 5 9 15 12 29 6 16 9 31 11 53" />
          <path d="M933 572c10-1 18 0 27-2 12-2 24-3 34-6l1-2" />
          <path d="M1191 547.500h-10c-10-2-18-8-28-10.500-7 5-12 9-12 17 0 10 4 19 11 24 6 5 13 4 17 11 5 6 5 19 0 24-5 6-13 12-20 10h-30" />
        </g>
        <path d="M1270 794.500h44M1321 794.500h45M1317.500 747v44M1317.500 798v45M1314.500 791.500h6v6h-6z" stroke="#fff" />
        <path d="M1062 956V906" stroke="#5cb85c" strokeWidth="5" />
        <path d="M1064.500 956V906" stroke="#3f8c45" strokeWidth="1.500" />
        <path d="M1062 953.500h49" stroke="#c95a5c" strokeWidth="5" />
        <path d="M1062 956h49" stroke="#8c3b40" strokeWidth="1.500" />
        <path d="M1060 951h5v5h-5z" fill="#3f7fd0" />
        <path d="M1060 891l5 6v6M1070 891l-5 6" stroke="#2f9a35" />
        <path d="M1106 938l12 12M1118 938l-12 12" stroke="#c23a3a" />
        <path d="M1060 938.500h11l-11 12h11" stroke="#1f6fff" />
      </g>
    </svg>
  );
}

type Layer = { name: string; on: boolean; color?: string; tint?: string };
const layers: Layer[] = [
  { name: "0", on: true }, { name: "Ball", on: false }, { name: "battery", on: false, color: "20...", tint: "bg-[#cccccc]" },
  { name: "Battery Mo...", on: true }, { name: "Dribbler", on: true, color: "20...", tint: "bg-[#cccccc]" }, { name: "Gear", on: true },
  { name: "Gear Sketc...", on: false }, { name: "Handle", on: false }, { name: "Handle Ske...", on: false }, { name: "Kicker", on: true },
  { name: "Kicker Mou...", on: true }, { name: "Layer 1", on: true }, { name: "Layer 1 Ske...", on: false }, { name: "Layer 1 to...", on: false },
  { name: "Layer 1.5", on: true, color: "19...", tint: "bg-[#c0ccd6]" }, { name: "Layer 1.5 S...", on: false }, { name: "Layer 2", on: true },
  { name: "Layer 2 Ske...", on: false }, { name: "Layer 2 to...", on: false },
];

const Chevrons = () => (
  <svg viewBox="0 0 12 10" className="h-[9px] w-3"><path d="M5.500 0L1.500 5l4 5M11 0L7 5l4 5" stroke="#d5d7da" strokeWidth="2" fill="none" /></svg>
);

function LayerTable() {
  return (
    <div className="h-[359px] overflow-hidden">
      <table className="w-[395px] table-fixed border-collapse text-left">
        <colgroup><col className="w-[18px]" /><col className="w-[78px]" /><col className="w-[41px]" /><col className="w-[50px]" /><col className="w-[42px]" /><col className="w-[38px]" /><col className="w-[48px]" /><col className="w-[64px]" /><col className="w-4" /></colgroup>
        <thead>
          <tr className="h-[23px] bg-[#454e60]">
            {["S..", "Name", "On", "Freeze", "Lock", "Plot", "Color", "Linetype", "Li"].map((h) => (
              <th key={h} scope="col" className="overflow-hidden whitespace-nowrap border-r border-[#2c3340] p-0 pl-[3px] font-normal last:border-r-0">
                {h === "Name" ? <span className="flex items-center justify-between pr-[2px]">Name<svg viewBox="0 0 8 4" className="h-1 w-[7px]"><path d="M0 4h8L4 0z" fill="#d5d7da" /></svg></span> : h}
              </th>
            ))}
          </tr>
        </thead>
        <tbody>
          {layers.map((l, i) => (
            <tr key={l.name} className={i === 0 ? "h-[18px] bg-[#7789a8]" : "h-[18px]"}>
              <td className="p-0"><span className="flex justify-center"><Ic n={i === 0 ? "check" : "plane"} c="h-3 w-[14px]" /></span></td>
              <td className="whitespace-nowrap border-r border-[#2c3340] p-0 pl-[3px]">{l.name}</td>
              <td className="p-0"><span className="flex justify-center"><Ic n={l.on ? "bulbY" : "bulbC"} c="h-[14px] w-[14px]" /></span></td>
              <td className="p-0"><span className="flex justify-center"><Ic n="sun" c="size-[13px]" /></span></td>
              <td className="p-0"><span className="flex justify-center"><Ic n="unlock" c="h-3 w-3" /></span></td>
              <td className="p-0"><span className="flex justify-center"><Ic n="print" c="size-[13px]" /></span></td>
              <td className="whitespace-nowrap p-0"><span className="flex items-center gap-1 pl-[3px]"><span className={`size-3 border border-black ${l.tint ?? "bg-white"}`} />{l.color ?? "wh..."}</span></td>
              <td className="whitespace-nowrap p-0 pl-[3px]">Continu...</td>
              <td className="p-0"><span className="ml-[2px] block h-px bg-[#eee]" /></td>
            </tr>
          ))}
        </tbody>
      </table>
    </div>
  );
}

function LayerPalette() {
  return (
    <aside className="absolute left-9 top-9 flex w-[539px] rounded-sm bg-[#2c3340] p-[2px] shadow-lg">
      <div className="flex w-[19px] flex-col items-center">
        <button aria-label="Close palette" className="flex h-[18px] items-center"><svg viewBox="0 0 8 8" className="size-2"><path d="M1 1l6 6M7 1L1 7" stroke="#d5d7da" strokeWidth="1.800" /></svg></button>
        <button aria-label="Auto-hide" className="flex h-[19px] items-center"><svg viewBox="0 0 8 8" className="size-2"><path d="M0 0h2v8H0zM2 4l3-2v4zM6 4l2-3v6z" fill="#d5d7da" /></svg></button>
        <button aria-label="Properties" className="flex h-[19px] items-center"><Ic n="gear" c="size-[10px]" /></button>
        <span className="mt-auto rotate-180 text-[#b6babf] [writing-mode:vertical-rl]">LAYER PROPERTIES MANAGER</span>
        <span className="mb-px mt-3"><Ic n="layStates" /></span>
      </div>
      <div className="flex min-w-0 flex-1 flex-col rounded-sm border border-[#262c37] bg-[#3b4453] pb-[5px] text-[#e9eaec]">
        <div className="flex items-start justify-between pl-[7px] pr-[2px] pt-[7px]">
          <p className="pt-[4px] leading-[15px]">Current layer: 0</p>
          <div className="flex h-4 items-center bg-[#4c586b] pr-[2px]">
            <input aria-label="Search for layer" placeholder="Search for layer" className="w-[110px] bg-transparent text-[11px] leading-4 outline-none placeholder:text-[#b4b8bf]" />
            <Ic n="search" c="size-3" />
          </div>
        </div>
        <div className="mt-[2px] flex h-6 items-center">
          <IconBtn n="filterNew" label="New property filter" />
          <IconBtn n="folder" label="New group filter" />
          <span className="h-[18px] w-px bg-[#767c86]" />
          <IconBtn n="layStates" label="Layer states" c="ml-[5px] w-6" />
          <IconBtn n="layNew" label="New layer" c="ml-[21px] w-[23px]" />
          <IconBtn n="layNewFrozen" label="New frozen layer" c="w-[23px]" />
          <IconBtn n="layDelete" label="Delete layer" c="w-[23px]" />
          <IconBtn n="laySet" label="Set current" c="w-[23px]" />
          <IconBtn n="refresh" label="Refresh" c="ml-auto w-[22px]" />
          <IconBtn n="toggleOverride" label="Toggle overrides" c="w-[22px]" />
          <IconBtn n="gear" label="Settings" c="mr-2 w-[22px]" />
        </div>
        <div className="flex gap-1 pl-[2px]">
          <div className="flex h-[376px] w-[95px] shrink-0 flex-col border border-[#2c3340]">
            <div className="flex h-[23px] items-center justify-between border-b border-[#2c3340] pl-[5px] pr-1"><span>Filters</span><button aria-label="Collapse filters"><Chevrons /></button></div>
            <div className="flex-1 overflow-hidden pt-[4px]">
              <div className="flex h-[18px] items-center pl-[7px]">
                <span className="flex size-[9px] items-center justify-center bg-white"><span className="h-px w-[5px] bg-black" /></span>
                <span className="w-2 border-b border-dotted border-[#c5c8cc]" />
                <Ic n="laySet" c="size-3" />
                <span className="ml-[5px] bg-[#7789a8] px-[2px] leading-[17px]">All</span>
              </div>
              <div className="flex h-[18px] items-center whitespace-nowrap pl-[29px]">
                <span className="mb-2 h-3 w-[11px] shrink-0 border-b border-l border-dotted border-[#c5c8cc]" />
                <Ic n="filterNew" c="size-3" />
                <span className="ml-[6px]">All Use</span>
              </div>
            </div>
            <div className="h-[18px] bg-[#efefef] pl-[17px] pt-2"><div className="h-[2px] w-[38px] bg-[#8b8b8b]" /></div>
            <div className="flex h-[23px] items-center justify-between pl-[5px] pr-1">
              <label className="flex items-center gap-[5px]"><input type="checkbox" className="size-[11px] appearance-none rounded-[2px] bg-[#f3f3f3]" /> Invert fi</label>
              <button aria-label="Collapse"><Chevrons /></button>
            </div>
          </div>
          <div className="flex min-w-0">
            <div className="w-[395px]">
              <LayerTable />
              <div className="h-[17px] bg-[#efefef] pl-[17px] pt-2"><div className="h-[2px] w-[167px] bg-[#8b8b8b]" /></div>
            </div>
            <div className="w-[17px] bg-[#efefef] pl-2 pt-[17px]"><div className="h-[160px] w-[2px] bg-[#8b8b8b]" /></div>
          </div>
        </div>
        <p className="pl-[5px] pt-[17px] leading-[15px]">All: 38 layers displayed of 38 total layers</p>
      </div>
    </aside>
  );
}

function ViewCube() {
  return (
    <div className="absolute right-[9px] top-[78px] flex w-[146px] flex-col items-center">
      <svg viewBox="0 0 146 62" className="h-[62px] w-[146px]">
        <ellipse cx="73" cy="57" rx="69" ry="4.500" fill="none" stroke="#4d535b" strokeWidth="2" />
        <path d="M3 56h16l-5 2H6zM122 55h20l4 2h-22zM64 60h17v2H64z" fill="#b5b5b5" />
        <rect x="46.500" y="2.500" width="50" height="50" fill="#b3b4b6" stroke="#6d7074" />
        <rect x="56" y="12" width="31" height="31" fill="#9fa8ae" />
        <text x="71.500" y="32" textAnchor="middle" fontFamily="Liberation Sans" fontWeight="bold" fontSize="12" fill="#4a5058">TOP</text>
      </svg>
      <button className="mr-[3px] mt-[53px] flex h-[18px] w-[68px] items-center justify-center gap-[6px] rounded border border-[#85889a] bg-[#9496a3] text-[10px] text-[#4b4e57]">Unnamed <svg viewBox="0 0 8 4" className="h-[5px] w-2"><path d="M0 0h8L4 4z" fill="none" stroke="#c5c7d0" /></svg></button>
    </div>
  );
}

function NavBar() {
  const s = { fill: "none", stroke: "#454b53", strokeWidth: 1.3 };
  const c = <svg viewBox="0 0 8 4" className="my-[7px] h-[3px] w-[6px]"><path d="M0 0h8L4 4z" fill="#454b53" /></svg>;
  return (
    <div className="absolute right-1 top-[236px] flex h-[212px] w-8 flex-col items-center rounded border border-[#7a7f83] bg-[#666b6e]">
      <button aria-label="Close navigation bar" className="mr-[2px] mt-px self-end"><svg viewBox="0 0 10 10" className="size-[9px]"><circle cx="5" cy="5" r="5" fill="#454b53" /><path d="M3 3l4 4M7 3L3 7" stroke="#666b6e" /></svg></button>
      <button aria-label="Wheel" className="mt-2"><svg viewBox="0 0 24 24" className="size-[23px]" {...s}><path d="M12 1h10v11A10.500 10.500 0 1112 1z" /><circle cx="12" cy="12" r="6" /><path d="M5 19l3-3M19 19l-3-3" /></svg></button>
      {c}
      <button aria-label="Pan"><svg viewBox="0 0 24 24" className="size-6" {...s}><path d="M9 22c-2-4-5-6-8-9 1-2 3-1 5 1L4 5c0-2 2-2 3 0l2 6V3c0-2 2-2 3 0v8l2-8c1-2 3-1 2 1l-1 8 4-7c1-1 3 0 2 2l-3 9c0 3-1 4-2 6z" fill="#595e64" /></svg></button>
      <button aria-label="Zoom" className="mt-1"><svg viewBox="0 0 24 24" className="size-6" {...s}><path d="M1 1l15 15M16 1L1 16M1 5V1h4M12 1h4v4M1 12v4h4" /><circle cx="17" cy="16" r="5" fill="#666b6e" /><path d="M20 20l4 4" strokeWidth="3" /></svg></button>
      {c}
      <button aria-label="Orbit"><svg viewBox="0 0 24 24" className="size-[23px]" {...s}><path d="M10 23V7H7l5-6 5 6h-3v16z" /><path d="M16 10c10 2 7 7-4 7-13 0-14-6-4-7M4 14l5 3-5 3" /></svg></button>
      {c}
      <button aria-label="ShowMotion" className="mt-px"><svg viewBox="0 0 24 24" className="size-6" {...s}><path d="M1 1h6v6H1zM9 1h6v6H9zM17 1h6v6h-6zM1 10h16v13H1z" /><path d="M6 13v7l7-3.500z" fill="#454b53" /></svg></button>
      <button aria-label="Navigation bar menu" className="mb-px mr-[2px] mt-auto self-end"><svg viewBox="0 0 10 10" className="size-[9px]"><circle cx="5" cy="5" r="4.500" fill="#454b53" /><path d="M3 5h4" stroke="#777" /></svg></button>
    </div>
  );
}

function CommandLine() {
  return (
    <div className="absolute bottom-0 left-[382px] right-[383px] flex flex-col">
      <div className="mb-[3px] mr-[6px] flex flex-col items-end gap-[5px] font-['Liberation_Mono'] text-[12px] leading-[15px]">
        <span className="rounded-sm bg-[#4d5155] px-px text-[#aeb0b3]">Command:</span>
        <span className="rounded-sm bg-[#5d605f] px-px text-[#eee]">Command:</span>
      </div>
      <div className="flex h-[25px]">
        <div className="flex w-14 items-center bg-[#272e3a]">
          <svg viewBox="0 0 6 20" className="ml-1 h-5 w-[6px]"><path d="M1 1v19M5 1v19" stroke="#b9bcc0" strokeWidth="2" strokeDasharray="2 1" /></svg>
          <button aria-label="Close command line" className="ml-[5px]"><svg viewBox="0 0 10 10" className="size-[9px]"><path d="M1 1l8 8M9 1L1 9" stroke="#b9bcc0" strokeWidth="1.600" /></svg></button>
          <button aria-label="Customize" className="ml-[11px]"><svg viewBox="0 0 16 16" className="size-[15px]"><path d="M1.500 14.500L9 6.500" stroke="#b9bcc0" strokeWidth="2.500" /><path d="M10.500 1L9 4v3l3 1.500 3.500-2V3.500L13 5.500l-1.500-1L13 1z" fill="#b9bcc0" /></svg></button>
        </div>
        <div className="flex flex-1 items-center bg-[#bcbdbf] pl-1 pr-[3px]">
          <Ic n="terminal" />
          <svg viewBox="0 0 8 4" className="ml-[3px] h-1 w-[7px]"><path d="M0 0h8L4 4z" fill="#555" /></svg>
          <input aria-label="Command" placeholder="Type a command" className="ml-[6px] flex-1 bg-transparent font-['Liberation_Mono'] text-[12px] italic outline-none placeholder:text-[#606266]" />
          <svg viewBox="0 0 8 4" className="h-1 w-[7px]"><path d="M0 4h8L4 0z" fill="#555" /></svg>
        </div>
      </div>
    </div>
  );
}

function Viewport() {
  return (
    <main className="relative min-h-[700px] flex-1 overflow-hidden">
      <Drawing />
      <p className="absolute left-[3px] top-[6px] flex gap-[2px] leading-[15px] text-[#e6e7e9]"><span>[−]</span><span>[Back]</span><span>[Shaded with edges]</span></p>
      <div className="absolute right-[11px] top-[10px] flex items-center gap-[10px]">
        <button aria-label="Minimize drawing" className="pt-[5px]"><svg viewBox="0 0 10 4" className="h-[3px] w-[10px]"><path d="M0 0h10v4H0z" fill="#eee" /></svg></button>
        <button aria-label="Restore drawing"><svg viewBox="0 0 10 10" className="size-[10px]"><path d="M3 2.500V1h6v6H7.500M1 3.500h5.500V9H1z" stroke="#eee" strokeWidth="1.800" fill="none" /></svg></button>
        <button aria-label="Close drawing"><svg viewBox="0 0 10 10" className="size-[10px]"><path d="M1.500 1.500l7 7M8.500 1.500l-7 7" stroke="#eee" strokeWidth="2.400" /></svg></button>
      </div>
      <LayerPalette />
      <ViewCube />
      <NavBar />
      <CommandLine />
    </main>
  );
}

/* ---------- status bar and task bar ---------- */

const St = ({ n, on, c = "w-[23px]" }: { n: string; on?: boolean; c?: string }) => (
  <button aria-label={n} className={`${c} flex h-[23px] items-center justify-center ${on ? "bg-[#5b8bc1]" : ""}`}><Ic n={n} /></button>
);
const StV = ({ c = "w-[17px]" }: { c?: string }) => <button aria-label="Options" className={`${c} flex h-[23px] items-center justify-center`}><Caret big /></button>;
const Grp = ({ children }: { children: ReactNode }) => <div className="flex h-[23px] gap-[2px] bg-[#3b4453]">{children}</div>;

function StatusBar() {
  return (
    <footer className="flex h-[30px] items-start border-t-2 border-[#3b4050] bg-[#222933]">
      <div className="flex pl-3 text-[#b6babf]">
        <button className="h-[17px] w-14 rounded-b-md bg-[#3b4453] font-bold leading-[15px] text-white">Model</button>
        <button className="ml-[3px] h-[17px] w-[62px] rounded-b-md bg-[#2d3440] leading-[15px]">Layout1</button>
        <button className="ml-[3px] h-[17px] w-[62px] rounded-b-md bg-[#2d3440] leading-[15px]">Layout2</button>
        <button aria-label="New layout" className="ml-[7px] flex h-[15px] w-[20px] items-center justify-center rounded-b-md bg-[#2d3440]"><svg viewBox="0 0 8 8" className="size-2"><path d="M4 0v8M0 4h8" stroke="#b6babf" strokeWidth="1.500" /></svg></button>
      </div>
      <div className="ml-auto flex gap-[3px] pr-[2px] pt-px text-[#f0f1f3]">
        <Grp><button className="w-[47px] text-[12px]">MODEL</button></Grp>
        <Grp><St n="sGrid" on /><St n="sDots" /><StV c="w-[13px]" /></Grp>
        <Grp><St n="sOrtho" /><St n="sPolar" on c="w-[22px]" /><StV c="w-4" /><St n="sIso" c="w-[20px]" /><StV c="w-[14px]" /></Grp>
        <Grp><St n="sTrack" on /><St n="sOsnap" on /><StV c="w-[14px]" /></Grp>
        <Grp><St n="sAnn1" on /><St n="sAnn2" c="w-[22px]" /><St n="sAnn3" /><button className="flex w-[31px] items-center justify-center gap-1">1:1 <Caret big /></button></Grp>
        <Grp><St n="gear" /><StV c="w-[14px]" /></Grp>
        <Grp><St n="sPlus" c="w-6" /></Grp>
        <Grp><St n="sUnits" on /></Grp>
        <Grp><St n="sClock" on /></Grp>
        <Grp><St n="sCloud" /><St n="sGraph" c="w-6" /></Grp>
        <Grp><St n="sFull" /><St n="sMenu" c="w-6" /></Grp>
      </div>
    </footer>
  );
}

const S24 = ({ children }: { children: ReactNode }) => <svg viewBox="0 0 24 24" className="size-6" aria-hidden="true">{children}</svg>;

const apps: { name: string; icon: ReactNode; run?: boolean; active?: boolean }[] = [
  { name: "Start", icon: <S24><defs><linearGradient id="win" x1="0" y1="0" x2="1" y2="1"><stop offset="0" stopColor="#7be8ff" /><stop offset="1" stopColor="#0f8cf0" /></linearGradient></defs><path d="M0 1h11.500v11H0zM12.500 1H24v11H12.500zM0 13h11.500v11H0zM12.500 13H24v11H12.500z" fill="url(#win)" /></S24> },
  { name: "Search", icon: <S24><circle cx="13.500" cy="9.500" r="8" fill="#43474a" stroke="#dfe3e6" strokeWidth="2.200" /><path d="M7.500 16L2 22.500" stroke="#dfe3e6" strokeWidth="2.600" /></S24> },
  { name: "Task view", icon: <S24><path d="M0 7h18v15H0z" fill="#67696b" /><path d="M6 1h18v16H6z" fill="#f3f3f3" /><path d="M6 7h12v10H6z" fill="#bdbdbd" /></S24> },
  { name: "File Explorer", run: true, icon: <S24><path d="M0 1h8l2 3h14v18H0z" fill="#e0a50d" /><path d="M0 6h24v16H0z" fill="#fccb45" /><path d="M5 22v-4q0-3 3-3h8q3 0 3 3v4z" fill="#117dcb" /></S24> },
  { name: "Discord", icon: <span className="flex size-6 items-center justify-center rounded-full bg-[#5865f2]"><FaDiscord className="size-[15px] text-white" /></span> },
  { name: "Mail", icon: <S24><circle cx="12" cy="12" r="11" fill="#49d3d8" /><path d="M6 7.500h12v9H6z" fill="#fff" /><path d="M6 7.500l6 5 6-5M6 16.500l4.500-5M18 16.500l-4.500-5" stroke="#49d3d8" strokeWidth="1.300" fill="none" /></S24> },
  { name: "WhatsApp", run: true, icon: <span className="flex size-6 items-center justify-center rounded-full border-2 border-white bg-[#25c345]"><FaWhatsapp className="size-4 text-white" /></span> },
  { name: "Telegram", icon: <span className="flex size-[23px] items-center justify-center rounded-full bg-[#2a9fdc]"><FaTelegramPlane className="size-[13px] text-white" /></span> },
  { name: "Chrome", icon: <S24><circle cx="12" cy="12" r="11" fill="#fbc02d" /><path d="M12 12L2.500 6.500A11 11 0 0121.500 6.500H12z" fill="#e33b2e" /><path d="M2.500 6.500A11 11 0 0011 23l5-9-4-2-4 2z" fill="#2ba24c" /><circle cx="12" cy="12" r="5.500" fill="#fff" /><circle cx="12" cy="12" r="4.300" fill="#4285f4" /></S24> },
  { name: "Brave", icon: <span className="relative flex size-6 items-center justify-center"><span className="absolute h-[17px] w-[13px] rounded-b-full bg-white" /><SiBrave className="relative size-6 text-[#fb542b]" /></span> },
  { name: "Opera", run: true, icon: <S24><circle cx="12" cy="12" r="11" fill="none" stroke="#d81b4b" strokeWidth="1.800" /><ellipse cx="12" cy="12" rx="5.500" ry="10.500" fill="none" stroke="#d81b4b" strokeWidth="2" /></S24> },
  { name: "Firefox", icon: <span className="relative flex size-6 items-center justify-center"><span className="absolute size-3 rounded-full bg-[#7b3fe4]" /><FaFirefoxBrowser className="relative size-6 text-[#ff7a2f]" /></span> },
  { name: "Terminal", icon: <S24><path d="M0 3h24v19H0z" fill="#3d3d3d" /><path d="M0 3h24v3H0z" fill="#c9c9c9" /><path d="M0 3h8v3H0z" fill="#7a7a7a" /><path d="M4 9l4 4-4 4M11 17.500h7" stroke="#eee" strokeWidth="2" fill="none" /></S24> },
  { name: "VS Code", icon: <S24><path d="M17.500 0L24 3v18l-6.500 3L7 14.500 2.500 18 0 16.700V7.300L2.500 6 7 9.500zM17.500 7L11 12l6.500 5zM2.500 9.500v5L5 12z" fill="#1f9cf0" fillRule="evenodd" /><path d="M17.500 0L24 3v18l-6.500 3z" fill="#35b0f7" /></S24> },
  { name: "Fusion 360", run: true, icon: <span className="flex size-6 items-center justify-center bg-[#fbe5d2] font-['Liberation_Sans'] text-[20px] font-bold text-[#e08a2c]">F</span> },
  { name: "AutoCAD", run: true, active: true, icon: <span className="flex size-6 items-center justify-center bg-[#fdf0ee] font-['Liberation_Sans'] text-[21px] font-bold text-[#bd2328]">A</span> },
  { name: "Eagle", icon: <span className="font-['Liberation_Sans'] text-[25px] font-bold leading-6 text-[#d9832a]">E</span> },
  { name: "Altium", icon: <S24><path d="M4 3l5-3 11 6v11l-9 6-3-2v-4l3-2v3l5-3V9L8 4.500 7 8 4 7z" fill="#c8a864" /><path d="M4 14l7-5v3l-4 3v3l-3-2z" fill="#e0c98f" /></S24> },
  { name: "KiCad", icon: <span className="relative flex size-6 items-center justify-center rounded-md bg-[#2b42c4] font-['Open_Sans'] text-[15px] font-bold text-white">Ki<span className="absolute right-[3px] top-1 size-[5px] rounded-full bg-[#f36b1c]" /></span> },
  { name: "BlueStacks", icon: <S24><path d="M0 15l12 8 12-8v2.500L12 24 0 17.500z" fill="#1d7fd6" /><path d="M0 12l12 8 12-8v3l-12 7.500L0 15z" fill="#e23127" /><path d="M0 9l12 8 12-8v3l-12 7.500L0 12z" fill="#fbd415" /><path d="M12 1l12 6v2.500L12 17 0 9.500V7z" fill="#54b32f" /><path d="M7 9l4-3h6" stroke="#fff" strokeWidth="1.500" fill="none" /></S24> },
  { name: "Valorant", icon: <S24><path d="M1.500 1.500h21v21h-21z" fill="#101a26" stroke="#a53a48" /><path d="M7 8l5 8h-3l-2-3zM17 8v5l-3 3h-2.500z" fill="#f4505e" /></S24> },
  { name: "WireWorks", run: true, icon: <span className="flex size-6 items-center justify-center rounded-full bg-white font-['Lato'] text-[19px] leading-5 text-[#2a9fdc]">w</span> },
  { name: "Mask", run: true, icon: <S24><circle cx="12" cy="12" r="12" fill="#17181a" /><path d="M4 7l8 4 8-4v9l-8 4-8-4z" fill="#27b6df" /><path d="M7 11.500l5 3 5-3M7 15l5 3 5-3" stroke="#17181a" strokeWidth="1.500" fill="none" /></S24> },
  { name: "Calculator", run: true, icon: <S24><path d="M3 0h18v24H3z" fill="#5f6f7d" /><path d="M5 2h14v5H5z" fill="#50d0f5" /><path d="M5 9h4v3.500H5zM10 9h4v3.500h-4zM15 9h4v3.500h-4zM5 14h4v3.500H5zM10 14h4v3.500h-4zM5 19h4v3.500H5zM10 19h4v3.500h-4z" fill="#c9d4dd" /><path d="M15 14h4v8.500h-4z" fill="#16417c" /></S24> },
  { name: "Cura", run: true, icon: <S24><path d="M8 0h16v18l-6 6H0V7z" fill="#0fa9e6" /><path d="M17 7h-5q-4 0-4 5t4 5h5" stroke="#fff" strokeWidth="3.500" fill="none" /></S24> },
];

function TaskBar() {
  return (
    <footer className="flex h-12 items-center bg-[#1f2225] pl-[11px] text-white">
      {apps.map((a) => (
        <button key={a.name} aria-label={a.name} className={`relative flex h-[40px] w-11 shrink-0 items-center justify-center ${a.active ? "rounded-md border border-[#3a3d42] bg-[#303338]" : ""}`}>
          {a.icon}
          {a.run && <span className={`absolute bottom-[1px] h-[3px] rounded-full ${a.active ? "w-4 bg-[#aebbe2]" : "w-[6px] bg-[#9a9da0]"}`} />}
        </button>
      ))}
      <div className="ml-auto flex items-center pr-5">
        <button aria-label="Hidden icons"><svg viewBox="0 0 12 8" className="h-2 w-3"><path d="M1 7l5-5 5 5" stroke="#fff" strokeWidth="1.500" fill="none" /></svg></button>
        <button className="ml-4 text-[12px]">ENG</button>
        <button aria-label="Network" className="ml-[17px]"><Ic n="net" c="size-[17px]" /></button>
        <button aria-label="Volume" className="ml-[7px]"><Ic n="speaker" /></button>
        <button className="ml-4 text-right text-[11px] leading-4"><time className="block">12:24 AM</time><time className="block">3/6/2022</time></button>
      </div>
    </footer>
  );
}

export default function App() {
  return (
    <div className="flex min-h-screen flex-col overflow-hidden bg-[#222933] font-['Noto_Sans',sans-serif] text-[11px] text-[#f0f1f3]">
      <TitleBar />
      <Tabs />
      <Ribbon />
      <FileTabs />
      <Viewport />
      <StatusBar />
      <TaskBar />
    </div>
  );
}
